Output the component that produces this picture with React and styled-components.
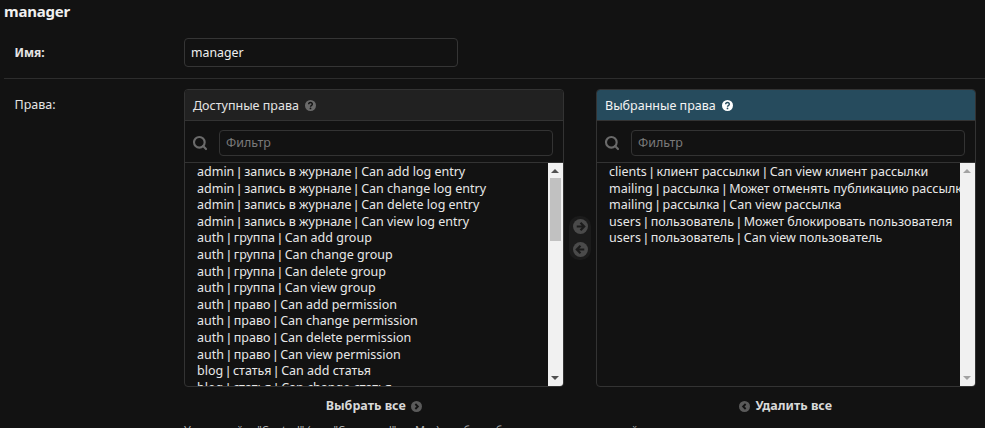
import React from "react";
import styled, { createGlobalStyle } from "styled-components";
import { Search } from "lucide-react";

const available = [
  "admin | запись в журнале | Can add log entry",
  "admin | запись в журнале | Can change log entry",
  "admin | запись в журнале | Can delete log entry",
  "admin | запись в журнале | Can view log entry",
  "auth | группа | Can add group",
  "auth | группа | Can change group",
  "auth | группа | Can delete group",
  "auth | группа | Can view group",
  "auth | право | Can add permission",
  "auth | право | Can change permission",
  "auth | право | Can delete permission",
  "auth | право | Can view permission",
  "blog | статья | Can add статья",
  "blog | статья | Can change статья",
];

const chosen = [
  "clients | клиент рассылки | Can view клиент рассылки",
  "mailing | рассылка | Может отменять публикацию рассылки",
  "mailing | рассылка | Can view рассылка",
  "users | пользователь | Может блокировать пользователя",
  "users | пользователь | Can view пользователь",
];

const GlobalStyle = createGlobalStyle`
  html, body {
    margin: 0;
    height: 428px;
    overflow: hidden;
    background: #121212;
  }
  body {
    font-family: "Noto Sans", "Open Sans", sans-serif;
    font-size: 13px;
    color: #eeeeee;
  }
`;

const Page = styled.div`
  height: 428px;
  overflow: hidden;
  padding-left: 4px;
`;

const Title = styled.h1`
  margin: 0;
  height: 28px;
  font-size: 15px;
  letter-spacing: -0.2px;
  line-height: 22px;
  font-weight: 700;
  color: #f0f0f0;
`;

const Row = styled.div`
  display: flex;
  padding: 10px 0 ${(p) => (p.$last ? "11px" : "10px")} 10.5px;
  border-bottom: ${(p) => (p.$last ? "none" : "1px solid #2d2d2d")};
`;

const Label = styled.label`
  width: 169.5px;
  flex: none;
  font-size: ${(p) => (p.$strong ? "12px" : "12.5px")};
  line-height: ${(p) => (p.$strong ? "30px" : "16px")};
  padding-top: ${(p) => (p.$strong ? "0" : "8px")};
  font-weight: ${(p) => (p.$strong ? 700 : 400)};
  color: #e4e4e4;
`;

const NameInput = styled.div`
  width: 274px;
  height: 29px;
  box-sizing: border-box;
  border: 1px solid #353535;
  border-radius: 4px;
  padding: 0 6px;
  line-height: 27px;
  font-size: 12.3px;
  color: #f0f0f0;
`;

const Chooser = styled.div`
  display: flex;
  flex-direction: column;
`;

const Columns = styled.div`
  display: flex;
  align-items: center;
`;

const Selector = styled.div`
  width: 379.5px;
  height: 298px;
  box-sizing: border-box;
  border: 1px solid #333333;
  border-radius: 4px;
  display: flex;
  flex-direction: column;
  overflow: hidden;
`;

const SelectorHeader = styled.div`
  height: 30px;
  flex: none;
  display: flex;
  align-items: center;
  gap: 6px;
  padding-left: 8px;
  font-size: 12.5px;
  color: ${(p) => (p.$chosen ? "#f4f4f4" : "#e4e4e4")};
  background: ${(p) => (p.$chosen ? "#264b5d" : "#212121")};
  border-bottom: 1px solid #333333;
`;

const FilterRow = styled.div`
  height: 42px;
  flex: none;
  box-sizing: border-box;
  display: flex;
  align-items: center;
  gap: 11px;
  padding: 2px 10px 0 7px;
  border-bottom: 1px solid #333333;
  color: #6a6a6a;
`;

const FilterInput = styled.div`
  flex: 1;
  height: 26px;
  box-sizing: border-box;
  border: 1px solid #333333;
  border-radius: 4px;
  padding-left: 6px;
  line-height: 24px;
  font-size: 12.5px;
  color: #7a7a7a;
`;

const ListArea = styled.div`
  flex: 1;
  min-height: 0;
  display: flex;
`;

const Options = styled.div`
  flex: 1;
  min-width: 0;
  overflow: hidden;
  padding: 1px 0 0 12px;
`;

const Option = styled.div`
  height: 16.6px;
  line-height: 16.6px;
  font-size: 12.5px;
  white-space: nowrap;
  color: #e8e8e8;
`;

// the pipe in Noto Sans is far wider than in the reference, Liberation's is close
const Pipe = styled.span`
  font-family: "Liberation Sans", sans-serif;
`;

const Scrollbar = styled.div`
  width: 15px;
  flex: none;
  background: #f1f1f1;
  display: flex;
  flex-direction: column;
  align-items: center;
  justify-content: space-between;
  position: relative;
`;

const ScrollArrow = styled.div`
  width: 0;
  height: 0;
  margin: 6px 0;
  border-left: 4px solid transparent;
  border-right: 4px solid transparent;
  border-${(p) => (p.$up ? "bottom" : "top")}: 4px solid ${(p) => (p.$active ? "#505050" : "#a3a3a3")};
`;

const ScrollThumb = styled.div`
  position: absolute;
  top: 15px;
  left: 2px;
  width: 11px;
  height: 63px;
  background: #c1c1c1;
`;

const Movers = styled.div`
  width: 22px;
  margin: 0 5px 0 5.5px;
  height: 44px;
  border-radius: 10px;
  background: #1b1b1b;
  display: flex;
  flex-direction: column;
  align-items: center;
  justify-content: center;
  gap: 8px;
`;

const Footer = styled.div`
  display: flex;
  margin-top: 11px;
`;

const FooterCell = styled.div`
  width: 379.5px;
  margin-right: 32.5px;
  display: flex;
  align-items: center;
  justify-content: center;
  gap: 5px;
  font-size: 12.5px;
  font-weight: 700;
  line-height: 16px;
  color: #d8d8d8;
`;

const Help = styled.div`
  margin-top: 9px;
  font-size: 11px;
  line-height: 14px;
  color: #b0b0b0;
  white-space: nowrap;
`;

const HelpIcon = ({ color }) => (
  <svg width="11" height="11" viewBox="0 0 24 24">
    <circle cx="12" cy="12" r="12" fill={color} />
    <path
      d="M8 9.5a4 4 0 0 1 8 0c0 2.6-4 2.8-4 5"
      fill="none"
      stroke={color === "#ffffff" ? "#264b5d" : "#121212"}
      strokeWidth="3"
    />
    <circle cx="12" cy="18.5" r="1.9" fill={color === "#ffffff" ? "#264b5d" : "#121212"} />
  </svg>
);

const ArrowIcon = ({ size, left, fill, stroke }) => (
  <svg width={size} height={size} viewBox="0 0 24 24">
    <circle cx="12" cy="12" r="12" fill={fill} />
    <path
      d={left ? "M18 12H7M12 6l-6 6 6 6" : "M6 12h11M12 6l6 6-6 6"}
      fill="none"
      stroke={stroke}
      strokeWidth="3.4"
    />
  </svg>
);

const ChevronIcon = ({ left }) => (
  <svg width="11" height="11" viewBox="0 0 24 24">
    <circle cx="12" cy="12" r="12" fill="#5a5a5a" />
    <path
      d={left ? "M14.5 6.5L9 12l5.5 5.5" : "M9.5 6.5L15 12l-5.5 5.5"}
      fill="none"
      stroke="#121212"
      strokeWidth="4"
    />
  </svg>
);

const OptionText = ({ text }) => {
  const parts = text.split(" | ");
  return (
    <Option>
      {parts.map((part, i) => (
        <React.Fragment key={part + i}>
          {i > 0 && (
            <>
              {" "}
              <Pipe>|</Pipe>{" "}
            </>
          )}
          {part}
        </React.Fragment>
      ))}
    </Option>
  );
};

const SelectorBox = ({ title, items, isChosen }) => (
  <Selector>
    <SelectorHeader $chosen={isChosen}>
      {title}
      <HelpIcon color={isChosen ? "#ffffff" : "#6a6a6a"} />
    </SelectorHeader>
    <FilterRow>
      <Search size={16} strokeWidth={3.2} />
      <FilterInput>Фильтр</FilterInput>
    </FilterRow>
    <ListArea>
      <Options>
        {items.map((item) => (
          <OptionText key={item} text={item} />
        ))}
      </Options>
      <Scrollbar>
        <ScrollArrow $up $active={!isChosen} />
        {!isChosen && <ScrollThumb />}
        <ScrollArrow $active={!isChosen} />
      </Scrollbar>
    </ListArea>
  </Selector>
);

const App = () => {
  return (
    <Page>
      <GlobalStyle />
      <Title>manager</Title>
      <Row>
        <Label $strong>Имя:</Label>
        <NameInput>manager</NameInput>
      </Row>
      <Row $last>
        <Label>Права:</Label>
        <Chooser>
          <Columns>
            <SelectorBox title="Доступные права" items={available} />
            <Movers>
              <ArrowIcon size={15} fill="#4a4a4a" stroke="#1b1b1b" />
              <ArrowIcon size={15} left fill="#4a4a4a" stroke="#1b1b1b" />
            </Movers>
            <SelectorBox title="Выбранные права" items={chosen} isChosen />
          </Columns>
          <Footer>
            <FooterCell>
              Выбрать все
              <ChevronIcon />
            </FooterCell>
            <FooterCell>
              <ChevronIcon left />
              Удалить все
            </FooterCell>
          </Footer>
          <Help>
            Удерживайте "Control" (или "Command" на Mac), чтобы выбрать несколько значений.
          </Help>
        </Chooser>
      </Row>
    </Page>
  );
};

export default App;
